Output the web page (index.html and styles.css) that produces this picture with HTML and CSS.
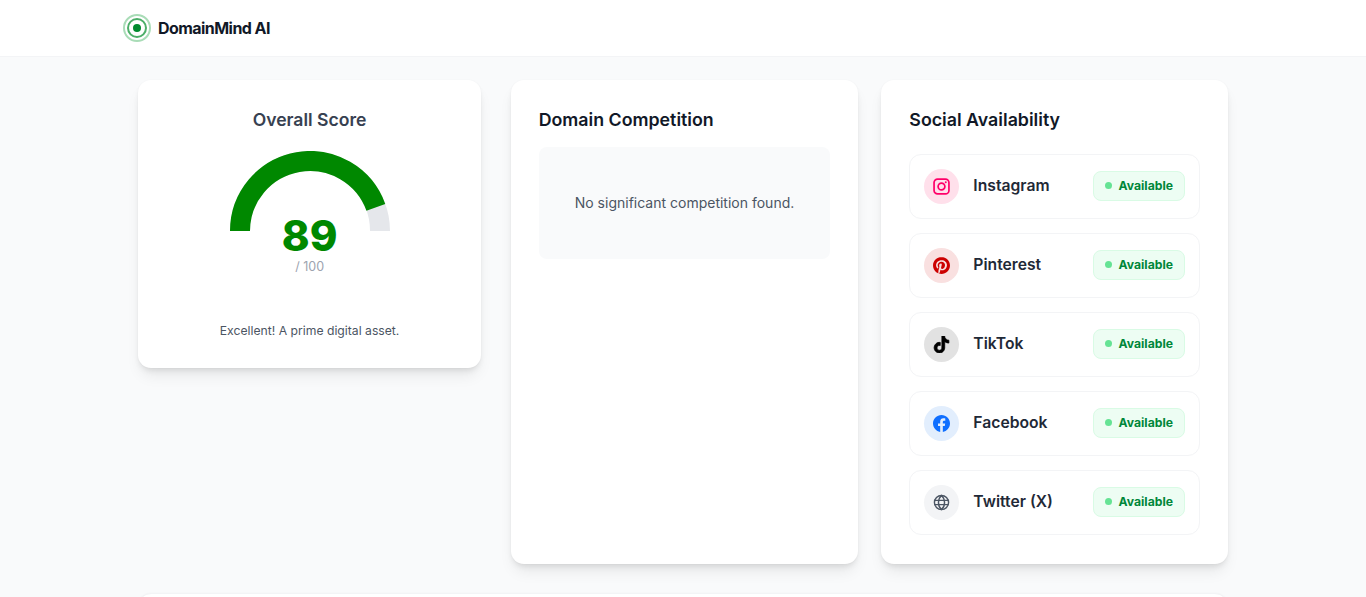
FILE: index.html
```html
<!DOCTYPE html>
<html lang="en">
<head>
<meta charset="utf-8">
<title>DomainMind AI</title>
<link rel="stylesheet" href="styles.css">
</head>
<body>
<header class="topbar">
  <div class="topbar-inner">
    <svg class="logo" viewBox="0 0 28 28" width="28" height="28" aria-hidden="true">
      <circle cx="14" cy="14" r="13" fill="none" stroke="#a9dcb7" stroke-width="2"/>
      <circle cx="14" cy="14" r="9" fill="none" stroke="#4cae68" stroke-width="2"/>
      <circle cx="14" cy="14" r="4" fill="#008a2e"/>
    </svg>
    <span class="brand">DomainMind AI</span>
  </div>
</header>
<main class="page">
  <div class="columns">
    <section class="card score-card">
      <h2 class="score-title">Overall Score</h2>
      <div class="gauge">
        <svg class="gauge-svg" viewBox="0 0 160 80" width="160" height="80" aria-hidden="true">
          <path d="M10 80A70 70 0 0 1 150 80" fill="none" stroke="#e5e7eb" stroke-width="20"/>
          <path d="M10 80A70 70 0 0 1 145.86 56.3" fill="none" stroke="#008800" stroke-width="20"/>
        </svg>
        <div class="gauge-value">89</div>
        <div class="gauge-max">/ 100</div>
      </div>
      <p class="score-note">Excellent! A prime digital asset.</p>
    </section>
    <section class="card competition-card">
      <h2 class="card-title">Domain Competition</h2>
      <div class="empty-box">No significant competition found.</div>
    </section>
    <section class="card social-card">
      <h2 class="card-title">Social Availability</h2>
      <ul class="social-list">
        <li class="social-row">
          <span class="icon-wrap icon-instagram">
            <svg viewBox="0 0 24 24" width="17" height="17" fill="none" stroke="#ff0069" stroke-width="2.4" aria-hidden="true"><rect x="1.500" y="1.500" width="21" height="21" rx="5"/><circle cx="12" cy="12" r="4.800"/><circle cx="18" cy="6" r="1.400" fill="#ff0069" stroke="none"/></svg>
          </span>
          <span class="social-name">Instagram</span>
          <span class="badge"><i class="dot"></i>Available</span>
        </li>
        <li class="social-row">
          <span class="icon-wrap icon-pinterest">
            <svg viewBox="0 0 24 24" width="17" height="17" fill="#cc0000" aria-hidden="true"><path d="M12.017 0C5.396 0 .029 5.367.029 11.987c0 5.079 3.158 9.417 7.618 11.162-.105-.949-.199-2.403.041-3.439.219-.937 1.406-5.957 1.406-5.957s-.359-.72-.359-1.781c0-1.663.967-2.911 2.168-2.911 1.024 0 1.518.769 1.518 1.688 0 1.029-.653 2.567-.992 3.992-.285 1.193.6 2.165 1.775 2.165 2.128 0 3.768-2.245 3.768-5.487 0-2.861-2.063-4.869-5.008-4.869-3.41 0-5.409 2.562-5.409 5.199 0 1.033.394 2.143.889 2.741.099.12.112.225.085.345-.09.375-.293 1.199-.334 1.363-.053.225-.172.271-.401.165-1.495-.69-2.433-2.878-2.433-4.646 0-3.776 2.748-7.252 7.92-7.252 4.158 0 7.392 2.967 7.392 6.923 0 4.135-2.607 7.462-6.233 7.462-1.214 0-2.354-.629-2.758-1.379l-.749 2.848c-.269 1.045-1.004 2.352-1.498 3.146 1.123.345 2.306.535 3.55.535 6.607 0 11.985-5.365 11.985-11.987C23.97 5.39 18.592.026 11.985.026L12.017 0z"/></svg>
          </span>
          <span class="social-name">Pinterest</span>
          <span class="badge"><i class="dot"></i>Available</span>
        </li>
        <li class="social-row">
          <span class="icon-wrap icon-tiktok">
            <svg viewBox="0 0 24 24" width="17" height="17" fill="#000" stroke="#000" stroke-width="1" aria-hidden="true"><path d="M12.525.02c1.31-.02 2.61-.01 3.91-.02.08 1.53.63 3.09 1.75 4.17 1.12 1.11 2.7 1.62 4.24 1.79v4.03c-1.44-.05-2.89-.35-4.2-.97-.57-.26-1.1-.59-1.62-.93-.01 2.92.01 5.84-.02 8.75-.08 1.4-.54 2.79-1.35 3.94-1.31 1.92-3.58 3.17-5.91 3.21-1.43.08-2.86-.31-4.08-1.03-2.02-1.19-3.44-3.37-3.65-5.71-.02-.5-.03-1-.01-1.49.18-1.9 1.12-3.72 2.58-4.96 1.66-1.44 3.98-2.13 6.15-1.72.02 1.48-.04 2.96-.04 4.44-.99-.32-2.15-.23-3.02.37-.63.41-1.11 1.04-1.36 1.75-.21.51-.15 1.07-.14 1.61.24 1.64 1.82 3.02 3.5 2.87 1.12-.01 2.19-.66 2.77-1.61.19-.33.4-.67.41-1.06.1-1.79.06-3.57.07-5.36.01-4.03-.01-8.05.02-12.07z"/></svg>
          </span>
          <span class="social-name">TikTok</span>
          <span class="badge"><i class="dot"></i>Available</span>
        </li>
        <li class="social-row">
          <span class="icon-wrap icon-facebook">
            <svg viewBox="0 0 24 24" width="17" height="17" fill="#0f6fff" aria-hidden="true"><path d="M24 12.073c0-6.627-5.373-12-12-12s-12 5.373-12 12c0 5.99 4.388 10.954 10.125 11.854v-8.385H7.078v-3.47h3.047V9.43c0-3.007 1.792-4.669 4.533-4.669 1.312 0 2.686.235 2.686.235v2.953H15.83c-1.491 0-1.956.925-1.956 1.874v2.25h3.328l-.532 3.47h-2.796v8.385C19.612 23.027 24 18.062 24 12.073z"/></svg>
          </span>
          <span class="social-name">Facebook</span>
          <span class="badge"><i class="dot"></i>Available</span>
        </li>
        <li class="social-row">
          <span class="icon-wrap icon-globe">
            <svg viewBox="0 0 24 24" width="17" height="17" fill="none" stroke="#4b5563" stroke-width="2" aria-hidden="true"><circle cx="12" cy="12" r="10"/><path d="M2 9h20M2 15h20M12 2c3 2.700 4.300 6.300 4.300 10s-1.300 7.300-4.300 10c-3-2.700-4.300-6.300-4.300-10s1.300-7.300 4.300-10z"/></svg>
          </span>
          <span class="social-name">Twitter (X)</span>
          <span class="badge"><i class="dot"></i>Available</span>
        </li>
      </ul>
    </section>
  </div>
  <section class="card lower-card"></section>
</main>
</body>
</html>
```
FILE: styles.css
```css
* { box-sizing: border-box; }
html, body { margin: 0; height: 100%; overflow: hidden; }
body {
  background: #f9fafb;
  font-family: Inter, "Liberation Sans", sans-serif;
  color: #111827;
}
.topbar {
  height: 57px;
  background: #fff;
  border-bottom: 1px solid #f3f4f6;
}
.topbar-inner {
  width: 1120px;
  height: 56px;
  margin: 0 auto;
  display: flex;
  align-items: center;
  gap: 7px;
}
.logo { display: block; }
.brand { font-size: 16px; line-height: 20px; margin-top: -1px; font-weight: 700; letter-spacing: -0.55px; color: #111827; }
.page {
  width: 1120px;
  margin: 0 auto;
  padding: 23px 15px 0;
}
.columns {
  display: flex;
  align-items: flex-start;
  height: 484px;
}
.card {
  background: #fff;
  border-radius: 13px;
  box-shadow: 0 10px 15px -3px rgba(0, 0, 0, 0.08), 0 4px 6px -2px rgba(0, 0, 0, 0.1), 0 0 2px rgba(0, 0, 0, 0.04);
}
.score-card {
  width: 343.5px;
  height: 287.5px;
  margin-right: 29.5px;
  padding: 28px;
  text-align: center;
}
.score-title {
  margin: 0;
  font-size: 17.6px;
  line-height: 24px;
  font-weight: 600;
  color: #374151;
}
.gauge {
  display: flex;
  flex-direction: column;
  align-items: center;
  margin-top: 19px;
}
.gauge-svg { display: block; }
.gauge-value {
  margin-top: -17px;
  font-size: 42px;
  line-height: 44px;
  font-weight: 800;
  color: #008800;
  z-index: 1;
}
.gauge-max {
  margin-top: 1px;
  font-size: 12.5px;
  line-height: 16px;
  color: #9ca3af;
}
.score-note {
  margin: 47px 0 0;
  font-size: 12.2px;
  line-height: 18px;
  color: #4b5563;
}
.competition-card {
  width: 348px;
  height: 483.5px;
  margin-right: 23px;
  padding: 28px;
}
.card-title {
  margin: 0;
  font-size: 17.8px;
  line-height: 24px;
  font-weight: 600;
  color: #111827;
}
.empty-box {
  height: 112px;
  margin-top: 15px;
  padding-bottom: 2px;
  background: #f9fafb;
  border-radius: 8px;
  display: flex;
  align-items: center;
  justify-content: center;
  font-size: 14px;
  color: #4b5563;
}
.social-card {
  width: 347px;
  height: 483.5px;
  padding: 28px;
}
.social-list {
  list-style: none;
  margin: 22px 0 0;
  padding: 0;
  display: flex;
  flex-direction: column;
  gap: 14px;
}
.social-row {
  height: 65px;
  padding: 0 14px;
  border: 1px solid #f3f4f6;
  border-radius: 12px;
  display: flex;
  align-items: center;
}
.icon-wrap {
  width: 35px;
  height: 35px;
  border-radius: 50%;
  display: flex;
  align-items: center;
  justify-content: center;
  margin-right: 14px;
  flex: none;
}
.icon-wrap svg { margin-bottom: 1px; }
.icon-instagram { background: #ffe0eb; }
.icon-pinterest { background: #f9e0e0; }
.icon-tiktok { background: #e2e2e2; }
.icon-facebook { background: #e2eefd; }
.icon-globe { background: #f3f4f6; }
.social-name {
  flex: 1;
  font-size: 15.7px;
  line-height: 20px;
  margin-top: -1px;
  font-weight: 600;
  color: #1f2937;
}
.badge {
  width: 92.5px;
  height: 29.5px;
  margin-top: -1px;
  padding-left: 11px;
  padding-bottom: 1px;
  background: #edfdf3;
  border: 1px solid #d9fbe5;
  border-radius: 8px;
  display: flex;
  align-items: center;
  font-size: 12.2px;
  font-weight: 700;
  color: #00873a;
}
.dot {
  width: 7px;
  height: 7px;
  margin-right: 7px;
  border-radius: 50%;
  background: #65e394;
}
.lower-card {
  height: 240px;
  margin-top: 29px;
  border: 1px solid #f3f4f6;
}
```
